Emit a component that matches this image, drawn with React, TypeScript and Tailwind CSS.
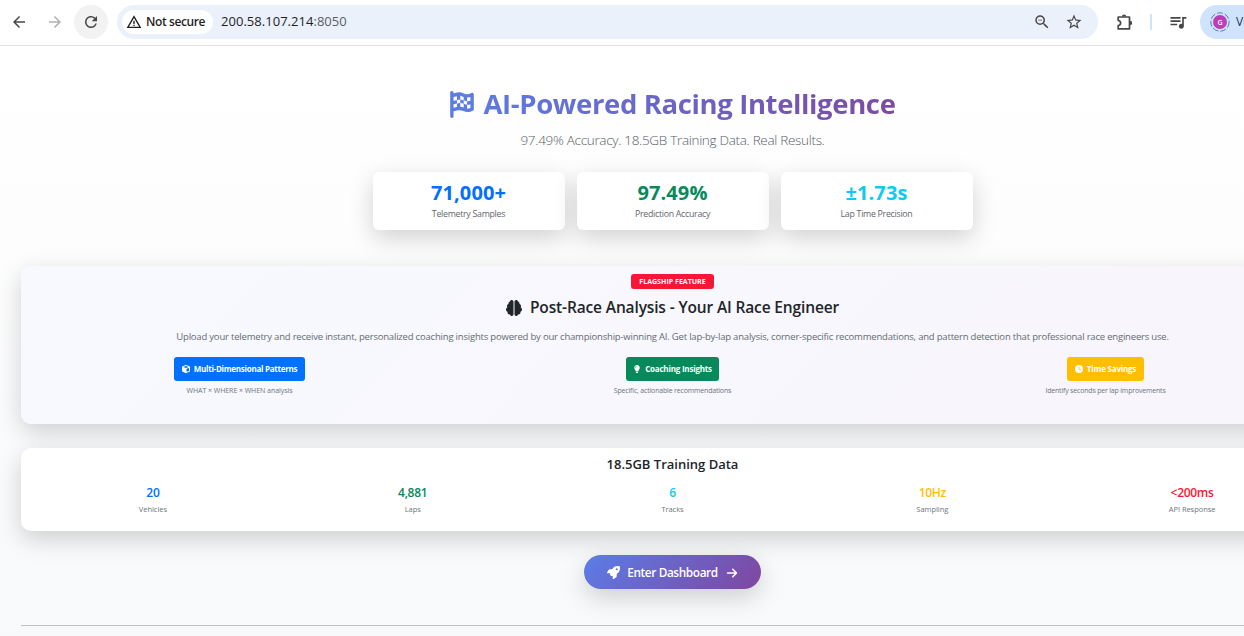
import clsx from "clsx";
import type { ReactNode } from "react";
import {
  FaArrowRight,
  FaBrain,
  FaClock,
  FaCube,
  FaFlagCheckered,
  FaLightbulb,
  FaRocket,
} from "react-icons/fa6";
import {
  MdArrowBack,
  MdArrowForward,
  MdQueueMusic,
  MdRefresh,
  MdStarBorder,
  MdWarningAmber,
  MdZoomOut,
} from "react-icons/md";

const headlineStats = [
  { value: "71,000+", label: "Telemetry Samples", color: "text-[#0070ff]" },
  { value: "97.49%", label: "Prediction Accuracy", color: "text-[#068a5b]" },
  { value: "±1.73s", label: "Lap Time Precision", color: "text-[#0dcaf0]" },
];

const features = [
  {
    icon: <FaCube />,
    title: "Multi-Dimensional Patterns",
    text: "WHAT × WHERE × WHEN analysis",
    size: "w-[131px] bg-[#0070ff] tracking-[-0.26px]",
    textSize: "tracking-[-0.05px]",
  },
  {
    icon: <FaLightbulb />,
    title: "Coaching Insights",
    text: "Specific, actionable recommendations",
    size: "w-[93px] bg-[#068a5b] tracking-[-0.2px]",
    textSize: "tracking-[-0.18px]",
  },
  {
    icon: <FaClock />,
    title: "Time Savings",
    text: "Identify seconds per lap improvements",
    size: "w-[77px] bg-[#ffbe00] tracking-[-0.2px]",
    textSize: "tracking-[-0.19px]",
  },
];

const dataStats = [
  { value: "20", label: "Vehicles", color: "text-[#0070ff]" },
  { value: "4,881", label: "Laps", color: "text-[#068a5b]" },
  { value: "6", label: "Tracks", color: "text-[#0dcaf0]" },
  { value: "10Hz", label: "Sampling", color: "text-[#ffbe00]" },
  { value: "<200ms", label: "API Response", color: "text-[#f71735]" },
];

function ExtensionIcon({ className }: { className?: string }) {
  return (
    <svg viewBox="0 0 18 18" className={className}>
      <path
        d="M2.2 4h11.3v11.9H2.2v-3.4c1.5-.2 2.4-1.1 2.4-2.5S3.700 7.700 2.200 7.500z"
        fill="none"
        stroke="currentColor"
        strokeWidth="1.7"
        strokeLinejoin="round"
      />
      <path d="M6 3.600a2.100 2.100 0 0 1 4.200 0zM14 7.700a2.200 2.200 0 0 1 0 4.400z" fill="currentColor" />
    </svg>
  );
}

function BrowserBar() {
  return (
    <header className="flex h-[46px] shrink-0 items-start border-b border-[#dfe1e4] bg-white pt-[5px] text-[#474747]">
      <div className="flex h-[34px] w-[117px] shrink-0 items-center">
        <MdArrowBack className="ml-[10px] size-[18px]" />
        <MdArrowForward className="ml-[18px] size-[18px] text-[#b0b0b0]" />
        <span className="ml-[10px] flex size-[34px] items-center justify-center rounded-full bg-[#f2f2f2]">
          <MdRefresh className="size-[18px]" />
        </span>
      </div>
      <div className="flex h-[34px] w-[981px] shrink-0 items-center rounded-full bg-[#eaf1fb] pl-[5px]">
        <span className="flex h-6 w-[91px] items-center rounded-full bg-white pl-1 text-xs font-semibold tracking-[-0.4px] whitespace-nowrap text-[#1f1f1f]">
          <MdWarningAmber className="mr-1 size-4" />
          Not secure
        </span>
        <span className="ml-2 text-[13px] tracking-[0.03px] text-[#1f1f1f]">
          200.58.107.214<span className="text-[#5a5d61]">:8050</span>
        </span>
        <MdZoomOut className="ml-auto size-[18px]" />
        <MdStarBorder className="mr-[15px] ml-[14px] size-[18px]" />
      </div>
      <div className="flex h-[34px] items-center">
        <ExtensionIcon className="ml-[18px] size-[18px]" />
        <span className="ml-4 h-4 w-[2px] bg-[#cfe3fd]" />
        <MdQueueMusic className="ml-4 size-5" />
      </div>
      <div className="ml-3 flex h-[34px] w-[120px] shrink-0 items-center rounded-l-full bg-[#cfe3fd] pl-[10px]">
        <svg viewBox="0 0 20 20" className="size-5">
          <circle cx="10" cy="10" r="9.2" fill="none" stroke="#5680b4" strokeDasharray="6 2" />
          <circle cx="10" cy="10" r="7" fill="#bd3db9" />
          <text x="10" y="12.6" textAnchor="middle" fontSize="7" fontWeight="600" fill="#fff">
            G
          </text>
        </svg>
        <span className="ml-[6px] text-xs text-[#1d3557]">Ve</span>
      </div>
    </header>
  );
}

function Card({ className, children }: { className?: string; children: ReactNode }) {
  return (
    <section className={clsx("shadow-[0_8px_24px_rgba(0,0,0,0.175)]", className)}>
      {children}
    </section>
  );
}

function Hero() {
  return (
    <div className="flex flex-col items-center">
      <h1 className="mt-[38px] flex h-10 items-center bg-[linear-gradient(90deg,#5b7de8,#7c4ba2)] bg-clip-text text-[27.5px] font-bold tracking-[-0.37px] whitespace-nowrap text-transparent">
        <FaFlagCheckered className="mr-2 h-[27px] w-[26px] text-[#5d7ce2]" />
        AI-Powered Racing Intelligence
      </h1>
      <p className="mt-[6px] h-5 text-[13.5px] leading-5 font-light tracking-[-0.31px] text-[#596067]">
        97.49% Accuracy. 18.5GB Training Data. Real Results.
      </p>
      <div className="mt-[22px] flex gap-3">
        {headlineStats.map((s) => (
          <Card
            key={s.label}
            className="flex h-[58px] w-48 flex-col items-center rounded-md bg-white pt-[9px]"
          >
            <div className={clsx("h-6 text-[20px] leading-6 font-bold tracking-[0.1px]", s.color)}>
              {s.value}
            </div>
            <div className="mt-[3px] text-[8.8px] leading-[13px] tracking-[-0.28px] text-[#5f676e]">
              {s.label}
            </div>
          </Card>
        ))}
      </div>
    </div>
  );
}

function FlagshipCard() {
  return (
    <Card className="mt-9 flex h-[158px] flex-col items-center rounded-[10px] bg-[linear-gradient(135deg,#f7f9fe,#f8f5fb)] px-[2px] pt-2">
      <span className="flex h-[15px] w-[83px] items-center justify-center rounded-[3px] bg-[#f71735] pt-px text-[7px] font-bold tracking-[0.03px] whitespace-nowrap text-white">
        FLAGSHIP FEATURE
      </span>
      <h2 className="mt-2 flex h-[22px] items-center text-[15.5px] font-semibold tracking-[-0.14px] text-[#212529]">
        <FaBrain className="mr-2 size-4" />
        Post-Race Analysis - Your AI Race Engineer
      </h2>
      <p className="mt-[11px] h-[13px] text-[9.5px] leading-[13px] tracking-[-0.197px] whitespace-nowrap text-[#646c74]">
        Upload your telemetry and receive instant, personalized coaching insights powered by our
        championship-winning AI. Get lap-by-lap analysis, corner-specific recommendations, and
        pattern detection that professional race engineers use.
      </p>
      <div className="mt-[14px] grid w-full grid-cols-3">
        {features.map((f) => (
          <div key={f.title} className="flex flex-col items-center">
            <span
              className={clsx(
                "flex h-6 items-center justify-center gap-1 rounded-[3px] text-[8px] font-bold whitespace-nowrap text-white",
                f.size,
              )}
            >
              {f.icon}
              {f.title}
            </span>
            <span className={clsx("mt-1 text-[7px] leading-3 text-[#6c757d]", f.textSize)}>
              {f.text}
            </span>
          </div>
        ))}
      </div>
    </Card>
  );
}

function TrainingDataCard() {
  return (
    <Card className="mt-6 h-[83px] rounded-[10px] bg-white px-[2px] pt-[6px]">
      <h3 className="text-center text-[13px] leading-5 font-semibold text-[#212529]">
        18.5GB Training Data
      </h3>
      <div className="mt-[11px] grid grid-cols-5">
        {dataStats.map((s) => (
          <div key={s.label} className="text-center">
            <div className={clsx("text-[12px] leading-4 font-semibold tracking-[-0.3px]", s.color)}>
              {s.value}
            </div>
            <div className="mt-[2px] text-[7.5px] leading-3 tracking-[-0.05px] text-[#6c757d]">
              {s.label}
            </div>
          </div>
        ))}
      </div>
    </Card>
  );
}

export default function App() {
  return (
    <div className="flex h-[636px] w-full flex-col overflow-hidden font-['Open_Sans','Noto_Sans',sans-serif]">
      <BrowserBar />
      <main className="min-h-0 w-[1345px] flex-1 bg-[linear-gradient(180deg,#ffffff,#f8f9fb)] px-[21px]">
        <Hero />
        <FlagshipCard />
        <TrainingDataCard />
        <div className="mt-6 flex justify-center">
          <button className="flex h-[34px] w-[177px] items-center justify-center rounded-full bg-[linear-gradient(135deg,#5b7de8,#7f469f)] pt-px text-[11.8px] font-semibold tracking-[-0.38px] whitespace-nowrap text-white shadow-[0_8px_24px_rgba(0,0,0,0.175)]">
            <FaRocket className="mr-[7px] size-[13px]" />
            Enter Dashboard
            <FaArrowRight className="ml-2 size-3" />
          </button>
        </div>
        <hr className="mt-9 border-[#c0c2c5]" />
      </main>
    </div>
  );
}
